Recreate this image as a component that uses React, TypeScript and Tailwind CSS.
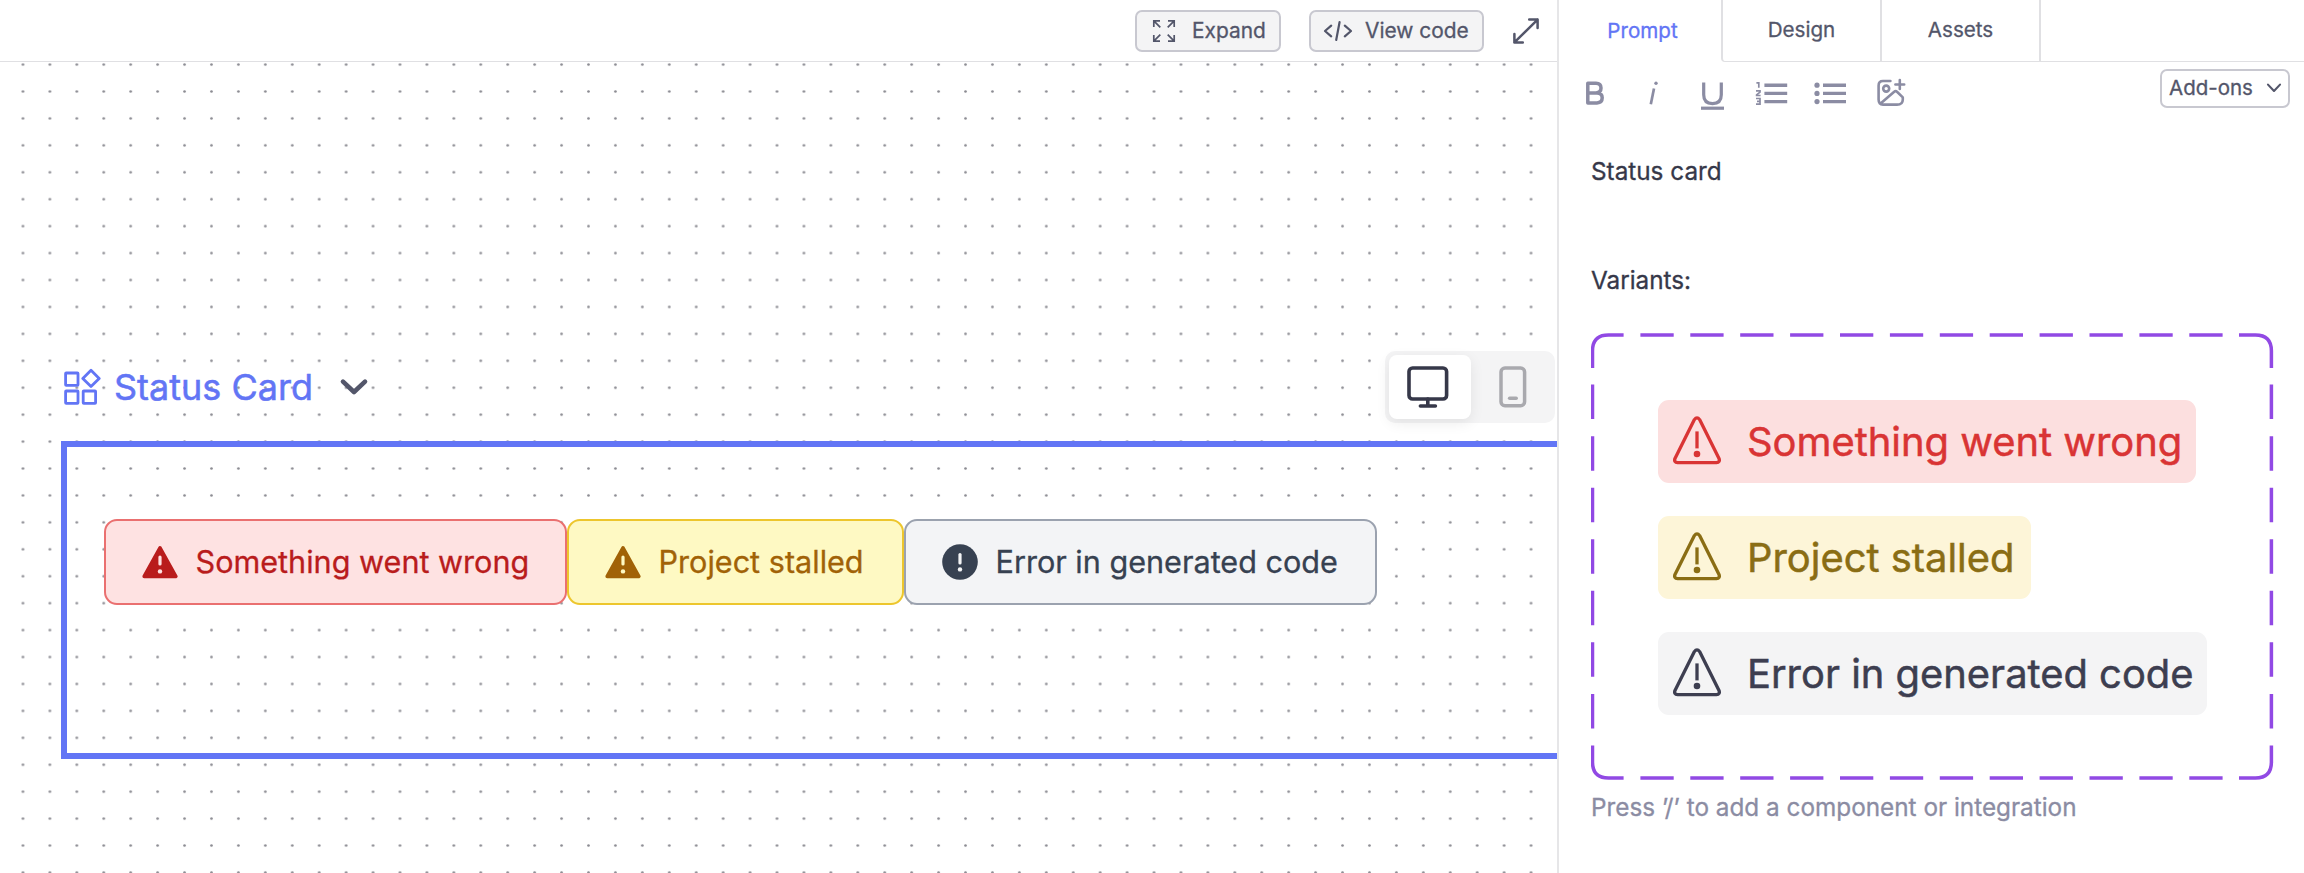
import type { ReactNode } from 'react';

const DOT_STEP = 26.93;

function Dots() {
  return (
    <svg className="absolute inset-0 h-full w-full" aria-hidden="true">
      <defs>
        <pattern id="dots" x="9.5" y="-10.9" width={DOT_STEP} height={DOT_STEP} patternUnits="userSpaceOnUse">
          <circle cx="13.46" cy="13.46" r="1.35" fill="#8b8b92" />
        </pattern>
      </defs>
      <rect width="1555" height="100%" fill="url(#dots)" />
    </svg>
  );
}

function ExpandIcon() {
  return (
    <svg width="24" height="24" viewBox="0 0 24 24" fill="none" stroke="#53566a" strokeWidth="1.7">
      <path d="M1.8 8V1.8H8M1.8 1.8 8.3 8.3M16 1.8h6.2V8M22.2 1.8l-6.5 6.5M1.8 16v6.2H8M1.8 22.2l6.5-6.5M16 22.2h6.2V16M22.2 22.2l-6.5-6.5" />
    </svg>
  );
}

function CodeIcon() {
  return (
    <svg width="30" height="22" viewBox="0 0 30 22" fill="none" stroke="#53566a" strokeWidth="2.2" strokeLinecap="round" strokeLinejoin="round">
      <path d="M8.2 5.6 2 11l6.2 5.4M21.8 5.6 28 11l-6.2 5.4M16.6 2 13.2 20" />
    </svg>
  );
}

function DiagonalIcon() {
  return (
    <svg width="28" height="28" viewBox="0 0 28 28" fill="none" stroke="#53566a" strokeWidth="2.5" strokeLinecap="round" strokeLinejoin="round">
      <path d="M2.4 25.4 25.6 2.6M17.2 2.6h8.4V11M2.4 17v8.4h8.4" />
    </svg>
  );
}

function ComponentIcon() {
  return (
    <svg width="38" height="38" viewBox="0 0 38 38" fill="none" stroke="#6275f5" strokeWidth="2.8" strokeLinejoin="round">
      <rect x="2.6" y="5" width="12.4" height="12.4" rx="0.6" />
      <rect x="2.6" y="23" width="12.4" height="12.4" rx="0.6" />
      <rect x="20.2" y="23" width="12.4" height="12.4" rx="0.6" />
      <path d="M28 2.2 36.2 10.4 28 18.6 19.8 10.4z" />
    </svg>
  );
}

function MonitorIcon() {
  return (
    <svg width="42" height="42" viewBox="0 0 42 42" fill="none" stroke="#363849" strokeWidth="3.6" strokeLinecap="round">
      <rect x="2" y="2" width="37.6" height="31" rx="3.6" />
      <path d="M20.8 33v7M13.4 40h15" />
    </svg>
  );
}

function PhoneIcon() {
  return (
    <svg width="28" height="42" viewBox="0 0 28 42" fill="none" stroke="#a9a9ae" strokeWidth="3.5" strokeLinecap="round">
      <rect x="2" y="2" width="23.6" height="37.8" rx="4" />
      <path d="M10.6 32.2h6.6" />
    </svg>
  );
}

function SolidTriangle({ hole }: { hole: string }) {
  return (
    <svg width="36" height="36" viewBox="0 0 36 36">
      <path d="M18 3.8 33.8 32.4H2.2z" fill="currentColor" stroke="currentColor" strokeWidth="3.6" strokeLinejoin="round" />
      <path d="M18 13v7" stroke={hole} strokeWidth="3.2" strokeLinecap="round" />
      <circle cx="18" cy="27.4" r="2.2" fill={hole} />
    </svg>
  );
}

function SolidCircle({ hole }: { hole: string }) {
  return (
    <svg width="36" height="36" viewBox="0 0 36 36">
      <circle cx="18" cy="18" r="17.8" fill="currentColor" />
      <path d="M18 10.6v8.4" stroke={hole} strokeWidth="3.2" strokeLinecap="round" />
      <circle cx="18" cy="25.4" r="2.2" fill={hole} />
    </svg>
  );
}

function OutlineTriangle() {
  return (
    <svg width="50" height="50" viewBox="0 0 50 50" fill="none" stroke="currentColor" strokeWidth="3.3" strokeLinejoin="round">
      <path d="M21.4 3.6Q24 0 26.6 3.6L46 42.4Q47.4 46.4 43.4 46.6H4.6Q0.6 46.4 2 42.4Z" />
      <path d="M24 15.4v17" />
      <circle cx="24" cy="38" r="3.3" fill="currentColor" stroke="none" />
    </svg>
  );
}

function NumberedIcon() {
  return (
    <svg width="34" height="26" viewBox="0 0 34 26" fill="none" stroke="#8b8ca3">
      <path d="M9.4 5.2h22.8M9.4 13.4h22.8M9.4 21.6h22.8" strokeWidth="3.4" />
      <path d="M1.4 2.8h2.4v5M1 10.8h4v1.3L1.6 14.8v.7h4M1 18.5h4v5.7H1M2 21.3h3" strokeWidth="1.7" />
    </svg>
  );
}

function BulletIcon() {
  return (
    <svg width="34" height="26" viewBox="0 0 34 26" fill="#8b8ca3" stroke="#8b8ca3">
      <path d="M9 5.2h23M9 13.4h23M9 21.6h23" strokeWidth="3.4" />
      <g stroke="none">
        <circle cx="3" cy="5.2" r="2.6" />
        <circle cx="3" cy="13.4" r="2.6" />
        <circle cx="3" cy="21.6" r="2.6" />
      </g>
    </svg>
  );
}

function ImagePlusIcon() {
  return (
    <svg width="30" height="30" viewBox="0 0 30 30" fill="none" stroke="#8b8ca3" strokeWidth="2.6" strokeLinecap="round" strokeLinejoin="round">
      <path d="M14.4 3H7Q2.6 3 2.6 7.4v14.2q0 5 4.4 5h14q5.8 0 5.8-5.2V19.4l-5.8-5.6q-1.4-1.2-2.8 0L4.6 25.6" />
      <circle cx="10.2" cy="10.6" r="3" />
      <path d="M23.8 2v9M19.4 6.5h8.8" />
    </svg>
  );
}

function BoldIcon() {
  return (
    <svg width="20" height="25" viewBox="0 0 20 25" fill="none" stroke="#8b8ca3" strokeWidth="3.5" strokeLinejoin="round">
      <path d="M1.8 2.3h8.2q5 0 5 4.8t-5 4.8H1.8zM1.8 11.9h9.2q5.2 0 5.2 4.9t-5.2 5.1H1.8z" />
    </svg>
  );
}

function ItalicIcon() {
  return (
    <svg width="12" height="25" viewBox="0 0 12 25" fill="none" stroke="#8b8ca3">
      <path d="M6 7.4 2.8 23.2" strokeWidth="2.7" />
      <circle cx="8" cy="2.3" r="1.7" fill="#8b8ca3" stroke="none" />
    </svg>
  );
}

function UnderlineIcon() {
  return (
    <svg width="24" height="29" viewBox="0 0 24 29" fill="none" stroke="#8b8ca3">
      <path d="M2.7 .4v12.4q0 8.8 8.8 8.8t8.8-8.8V.4" strokeWidth="3.2" />
      <path d="M0 26.2h23" strokeWidth="3.2" />
    </svg>
  );
}

function DashedFrame() {
  return (
    <svg className="absolute inset-0" width="683" height="448" viewBox="0 0 683 448" fill="none" stroke="#9149e4" strokeWidth="3.5">
      <path d="M1.5 35V18Q1.5 2 17.5 2H32.6M648 2H664.4Q680.4 2 680.4 18V35M680.4 412.4V429Q680.4 445 664.4 445H648M32.6 445H17.5Q1.5 445 1.5 429V412.4" />
      <path d="M49.4 2H633.4M49.4 445H633.4" strokeDasharray="33.3 16.6" />
      <path d="M1.5 51.6V399M680.4 51.6V399" strokeDasharray="34.5 17.05" />
    </svg>
  );
}

function StatusCard({ className, icon, children }: { className: string; icon: ReactNode; children: string }) {
  return (
    <div className={`flex h-[86px] items-center rounded-[13px] border-2 pl-[36px] ${className}`}>
      {icon}
      <span className="ml-[18px] text-[30.6px] leading-[40px] whitespace-nowrap">{children}</span>
    </div>
  );
}

function Variant({ className, children }: { className: string; children: string }) {
  return (
    <div className={`flex h-[83px] items-center rounded-[11px] pl-[15px] ${className}`}>
      <OutlineTriangle />
      <span className="ml-[24px] pt-[1px] text-[39.9px] leading-[48px] whitespace-nowrap [-webkit-text-stroke:0.5px]">{children}</span>
    </div>
  );
}

function Canvas() {
  return (
    <section className="flex h-full w-[1557px] shrink-0 flex-col overflow-hidden">
      <header className="flex h-[62px] shrink-0 items-center border-b border-[#e0e0e3] pt-[1px] pl-[1135px] text-[20.9px] text-[#53566a]">
        <button className="flex h-[42px] w-[146px] items-center rounded-[7px] border-2 border-[#c8c8d0] bg-[#f4f4f5] pl-[15px]">
          <ExpandIcon />
          <span className="ml-[16px]">Expand</span>
        </button>
        <button className="ml-[28px] flex h-[42px] w-[175px] items-center rounded-[7px] border-2 border-[#c8c8d0] bg-[#f4f4f5] pl-[12px]">
          <CodeIcon />
          <span className="ml-[12px] whitespace-nowrap">View code</span>
        </button>
        <button className="ml-[27.5px]">
          <DiagonalIcon />
        </button>
      </header>

      <main className="relative flex-1">
        <Dots />
        <div className="relative flex flex-col pt-[289px]">
          <div className="flex h-[90px] items-start justify-between pl-[63px]">
            <div className="flex h-[72px] items-center">
              <ComponentIcon />
              <h1 className="ml-[13px] text-[36px] leading-[44px] text-[#6275f5] [-webkit-text-stroke:0.5px]">Status Card</h1>
              <svg className="ml-[26px]" width="30" height="20" viewBox="0 0 30 20" fill="none" stroke="#53566a" strokeWidth="4.6" strokeLinecap="round" strokeLinejoin="round">
                <path d="M4 4.6 15 15 26 4.6" />
              </svg>
            </div>
            <div className="mr-[2px] flex h-[72px] w-[170px] items-center rounded-[10px] bg-[#f4f4f5] pl-[4px]">
              <div className="flex h-[64px] w-[82px] items-center rounded-[8px] bg-white pl-[17.5px] shadow-[0_4px_14px_rgba(0,0,0,0.08)]">
                <MonitorIcon />
              </div>
              <div className="ml-[28px]">
                <PhoneIcon />
              </div>
            </div>
          </div>

          <div className="ml-[61px] h-[318px] border-[6.5px] border-r-0 border-[#6275f5] pt-[72px] pl-[36.5px]">
            <div className="flex">
              <StatusCard className="w-[463px] border-[#ea7070] bg-[#fee2e2] text-[#b91c1c]" icon={<SolidTriangle hole="#fee2e2" />}>
                Something went wrong
              </StatusCard>
              <StatusCard className="w-[337px] border-[#edc62d] bg-[#fef9c3] text-[#a16207]" icon={<SolidTriangle hole="#fef9c3" />}>
                Project stalled
              </StatusCard>
              <StatusCard className="w-[473px] border-[#9ba2af] bg-[#f3f4f6] text-[#374151]" icon={<SolidCircle hole="#f3f4f6" />}>
                Error in generated code
              </StatusCard>
            </div>
          </div>
        </div>
      </main>
    </section>
  );
}

function SidePanel() {
  return (
    <aside className="flex h-full flex-1 flex-col border-l-2 border-[#e6e6e8] text-[#363849]">
      <nav className="flex h-[62px] shrink-0 text-[20.6px] text-[#53566a]">
        <button className="w-[162px] pl-[5px] text-[#6275f5]">Prompt</button>
        <button className="w-[159px] rounded-bl-[4px] border-b border-l-2 border-[#e0e0e3]">Design</button>
        <button className="w-[159px] border-b border-l-2 border-[#e0e0e3]">Assets</button>
        <div className="flex-1 border-b border-l-2 border-[#e0e0e3]" />
      </nav>

      <div className="flex h-[60px] items-start pt-[7px] pl-[26.5px]">
        <div className="flex items-start pt-[10px]">
          <div className="mt-[2px] w-[62.5px]"><BoldIcon /></div>
          <div className="mt-[2px] w-[52.5px]"><ItalicIcon /></div>
          <div className="mt-[3px] w-[54px]"><UnderlineIcon /></div>
          <div className="mt-[1px] w-[59.5px]"><NumberedIcon /></div>
          <div className="mt-[1px] w-[62px]"><BulletIcon /></div>
          <div className="-mt-[1px]"><ImagePlusIcon /></div>
        </div>
        <button className="mr-[14px] ml-auto flex h-[39px] w-[130px] items-center rounded-[7px] border-2 border-[#c8c8d0] pb-[1px] pl-[7px] text-[20.5px] text-[#53566a]">
          Add-ons
          <svg className="ml-[13px]" width="16" height="12" viewBox="0 0 16 12" fill="none" stroke="#53566a" strokeWidth="2.1" strokeLinecap="round" strokeLinejoin="round">
            <path d="M2 2.6 8 9l6-6.4" />
          </svg>
        </button>
      </div>

      <div className="flex flex-col pt-[31px] pl-[32px] text-[24.3px] leading-[36px]">
        <p>Status card</p>
        <p className="mt-[73px]">Variants:</p>
        <div className="relative mt-[35px] flex h-[448px] w-[683px] flex-col items-start gap-[33px] pt-[66.5px] pl-[67px]">
          <DashedFrame />
          <Variant className="w-[538px] bg-[#fcdfdf] text-[#d93434]">Something went wrong</Variant>
          <Variant className="w-[373px] bg-[#fdf5d8] text-[#8a6d14]">Project stalled</Variant>
          <Variant className="w-[549px] bg-[#f4f4f5] text-[#3d3e50]">Error in generated code</Variant>
        </div>
        <p className="mt-[8px] text-[#8b8ca3]">Press ’/’ to add a component or integration</p>
      </div>
    </aside>
  );
}

export default function App() {
  return (
    <div className="flex h-[873px] w-[2304px] overflow-hidden bg-white font-[Inter,sans-serif] [-webkit-text-stroke:0.3px]">
      <Canvas />
      <SidePanel />
    </div>
  );
}
